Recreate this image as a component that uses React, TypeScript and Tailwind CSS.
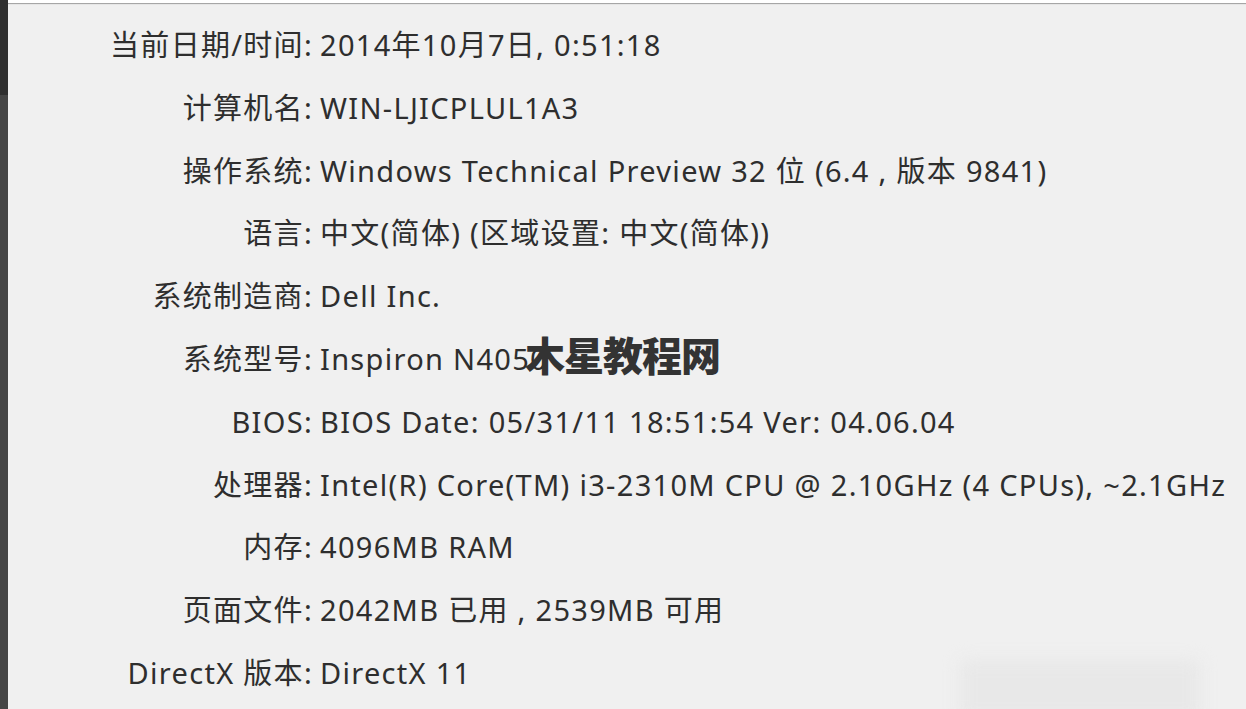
const rows: [string, string][] = [
  ['当前日期/时间:', '2014年10月7日, 0:51:18'],
  ['计算机名:', 'WIN-LJICPLUL1A3'],
  ['操作系统:', 'Windows Technical Preview 32 位 (6.4 , 版本 9841)'],
  ['语言:', '中文(简体) (区域设置: 中文(简体))'],
  ['系统制造商:', 'Dell Inc.'],
  ['系统型号:', 'Inspiron N4050'],
  ['BIOS:', 'BIOS Date: 05/31/11 18:51:54 Ver: 04.06.04'],
  ['处理器:', 'Intel(R) Core(TM) i3-2310M CPU @ 2.10GHz (4 CPUs), ~2.1GHz'],
  ['内存:', '4096MB RAM'],
  ['页面文件:', '2042MB 已用 , 2539MB 可用'],
  ['DirectX 版本:', 'DirectX 11'],
]

export default function App() {
  return (
    <div className="relative flex h-[709px] w-[1246px] overflow-hidden bg-[#f0f0f0] font-['Noto_Sans','Noto_Sans_CJK_SC',sans-serif] text-[#2e2e2e]">
      {/* dark window edge on the left */}
      <div className="flex w-2 flex-col">
        <div className="h-[95px] bg-[#2f2f2f]" />
        <div className="flex-1 bg-[#454545]" />
      </div>

      <div className="flex flex-1 flex-col">
        <div className="h-[3px] bg-white" />
        <div className="h-px bg-[#a6a6a6]" />
        <div className="h-px bg-[#e6e6e6]" />

        <div className="grid grid-cols-[305px_1fr] gap-x-[7px] pt-[9px] text-[29px] tracking-[1.3px]">
          {rows.map(([label, value]) => (
            <div key={label} className="contents">
              <span className="h-[62.8px] text-right leading-[62.8px] whitespace-nowrap">{label}</span>
              <span className="h-[62.8px] leading-[62.8px] whitespace-nowrap">{value}</span>
            </div>
          ))}
        </div>
      </div>

      {/* site watermark */}
      <div className="absolute top-[326px] left-[525px] font-['Noto_Sans_CJK_SC',sans-serif] text-[40px] leading-[56px] font-black tracking-[-1px] text-[#333]">
        木星教程网
      </div>

      {/* smudge bottom right */}
      <div className="absolute top-[660px] left-[960px] h-[60px] w-[240px] rounded-md bg-[#e8e8e8] blur-sm" />
    </div>
  )
}
